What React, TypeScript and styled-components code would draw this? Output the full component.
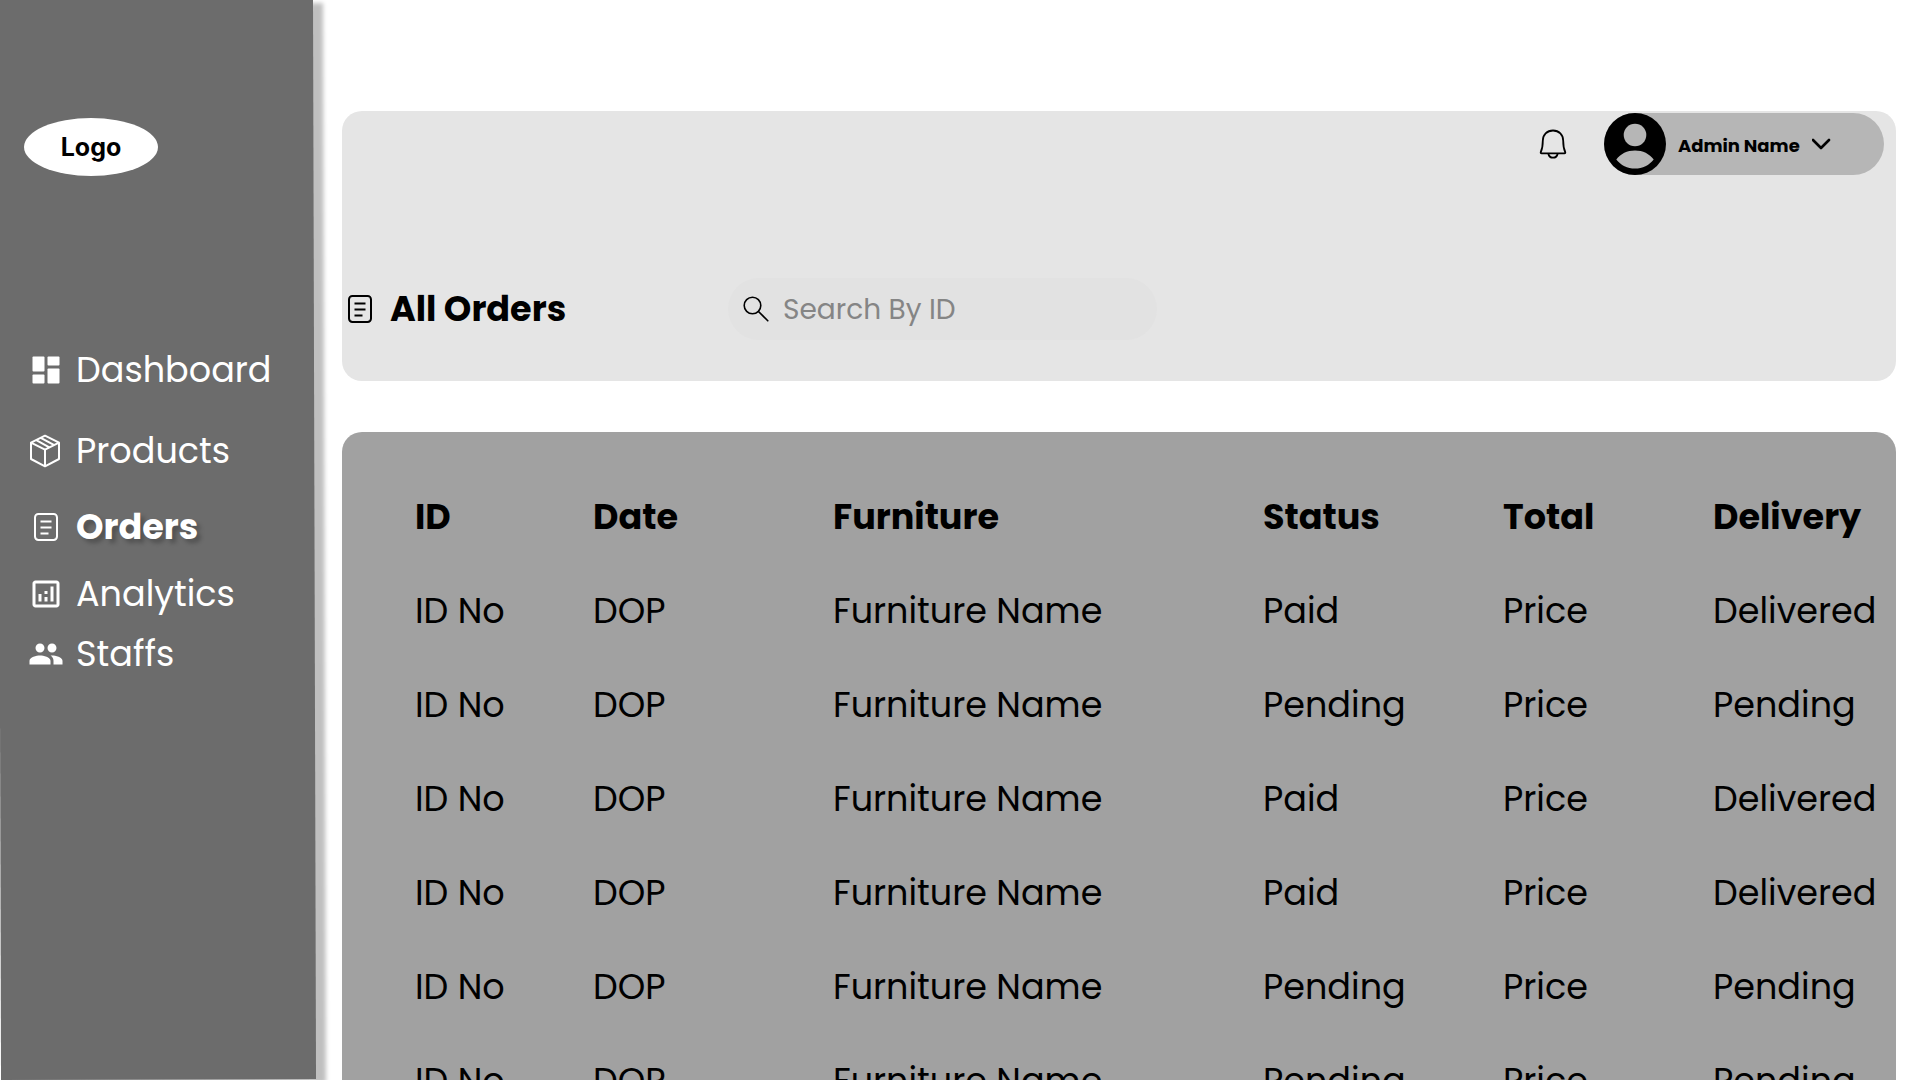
import React from "react";
import styled, { createGlobalStyle, css } from "styled-components";

const GlobalStyle = createGlobalStyle`
  *, *::before { box-sizing: border-box; }
  body {
    margin: 0;
    background: #fff;
    color: #000;
    font-family: Poppins, Inter, sans-serif;
  }
`;

const Shell = styled.div`
  display: flex;
  height: 100vh;
  overflow: hidden;
`;

const Sidebar = styled.aside`
  position: relative;
  flex: none;
  width: 314px;
  padding: 118px 24px 0;
  color: #fff;

  &::before {
    content: "";
    position: absolute;
    z-index: -1;
    inset: 0 1px 0 -2px;
    background: #6c6c6c;
    box-shadow: 10px 4px 4px rgba(0, 0, 0, 0.25);
    transform: rotate(-0.16deg);
    transform-origin: top left;
  }
`;

const Logo = styled.a`
  display: flex;
  align-items: center;
  justify-content: center;
  width: 134px;
  height: 58px;
  border-radius: 50%;
  background: #fff;
  color: #000;
  font-family: Inter, sans-serif;
  font-size: 25px;
  font-weight: 700;
  text-decoration: none;
`;

const Menu = styled.nav`
  display: flex;
  flex-direction: column;
  padding-top: 167px;
`;

const MenuLink = styled.a<{ $active?: boolean; $gap: number }>`
  display: flex;
  align-items: center;
  gap: 12px;
  height: 54px;
  padding-left: 4px;
  margin-bottom: ${(p) => p.$gap}px;
  color: inherit;
  font-size: 35px;
  line-height: 54px;
  text-decoration: none;
  white-space: nowrap;
  ${(p) =>
    p.$active &&
    css`
      font-weight: 700;
      text-shadow: 4px 4px 4px rgba(0, 0, 0, 0.25);
    `}
`;

const Icon = styled.svg<{ $size: number }>`
  display: block;
  flex: none;
  width: ${(p) => p.$size}px;
  height: ${(p) => p.$size}px;
`;

const Main = styled.main`
  flex: 1;
  min-width: 0;
  display: flex;
  flex-direction: column;
  gap: 51px;
  padding: 111px 24px 0 28px;
`;

const Header = styled.header`
  flex: none;
  display: flex;
  flex-direction: column;
  gap: 103px;
  padding: 2px 12px 41px 0;
  border-radius: 20px;
  background: #e5e5e5;
`;

const Account = styled.div`
  display: flex;
  align-items: center;
  justify-content: flex-end;
  gap: 33px;
`;

const PlainButton = styled.button`
  padding: 0;
  border: 0;
  background: none;
  color: inherit;
`;

const Profile = styled.button`
  display: flex;
  align-items: center;
  gap: 12px;
  width: 280px;
  height: 62px;
  padding: 0;
  border: 0;
  border-radius: 31px;
  background: #b6b6b6;
  color: #000;
  font-family: inherit;
  font-size: 18px;
  font-weight: 700;
  white-space: nowrap;
`;

const ProfileName = styled.span`
  padding-top: 3px;
`;

const Toolbar = styled.div`
  display: flex;
  align-items: center;
`;

const Title = styled.h1`
  display: flex;
  align-items: center;
  gap: 12px;
  width: 386px;
  margin: 0;
  font-size: 35px;
  line-height: 54px;
  font-weight: 700;
  white-space: nowrap;
`;

const Search = styled.label`
  display: flex;
  align-items: center;
  gap: 12px;
  width: 429px;
  height: 62px;
  padding: 0 24px 0 13px;
  border-radius: 31px;
  background: #e2e2e2;
`;

const SearchInput = styled.input`
  flex: 1;
  min-width: 0;
  padding: 2px 0 0;
  border: 0;
  outline: 0;
  background: none;
  font-family: inherit;
  font-size: 28px;
  line-height: 42px;
  &::placeholder { color: #858585; opacity: 1; }
`;

const Panel = styled.section`
  flex: none;
  padding: 38px 0 0 73px;
  border-radius: 20px;
  background: #a1a1a1;
`;

const Table = styled.table`
  width: 100%;
  table-layout: fixed;
  border-collapse: collapse;
  font-size: 35px;
  line-height: 54px;
`;

const Col = styled.col<{ $width?: number }>`
  width: ${(p) => (p.$width ? `${p.$width}px` : "auto")};
`;

const cell = css`
  height: 94px;
  padding: 0;
  text-align: left;
  white-space: nowrap;
`;

const Th = styled.th`
  ${cell}
  font-weight: 700;
`;

const Td = styled.td`
  ${cell}
`;

const DashboardIcon = () => (
  <Icon $size={36} viewBox="0 0 24 24" fill="currentColor" aria-hidden>
    <rect x="3" y="3" width="8" height="10" rx=".6" />
    <rect x="3" y="15" width="8" height="6" rx=".6" />
    <rect x="13" y="3" width="8" height="6" rx=".6" />
    <rect x="13" y="11" width="8" height="10" rx=".6" />
  </Icon>
);

const BoxIcon = () => (
  <Icon $size={36} viewBox="0 0 36 36" fill="none" stroke="currentColor" strokeWidth="2" strokeLinejoin="round" aria-hidden>
    <path d="M17 2.700 31 9.700V26L17 33.300 3 26V9.700ZM3 9.700l14 7 14-7M17 16.700v16.600M12.800 4.900l13 6.900M8.300 7.200l13 7.200" />
  </Icon>
);

const OrderIcon = () => (
  <Icon $size={36} viewBox="0 0 36 36" fill="none" stroke="currentColor" strokeWidth="2" aria-hidden>
    <rect x="7" y="5" width="22" height="26" rx="3.400" />
    <path d="M12.500 12.500h11M12.500 18.500h11M12.500 24.500h8" />
  </Icon>
);

const AnalyticsIcon = () => (
  <Icon $size={36} viewBox="0 0 24 24" fill="currentColor" aria-hidden>
    <path d="M19 3H5c-1.1 0-2 .9-2 2v14c0 1.1.9 2 2 2h14c1.1 0 2-.9 2-2V5c0-1.1-.9-2-2-2zm0 16H5V5h14v14zM7 12h2v5H7zm8-5h2v10h-2zm-4 7h2v3h-2zm0-4h2v2h-2z" />
  </Icon>
);

const StaffIcon = () => (
  <Icon $size={36} viewBox="0 0 24 24" fill="currentColor" aria-hidden>
    <path d="M16 11c1.66 0 2.99-1.34 2.99-3S17.66 5 16 5s-3 1.34-3 3 1.34 3 3 3zm-8 0c1.66 0 2.99-1.34 2.99-3S9.66 5 8 5 5 6.34 5 8s1.34 3 3 3zm0 2c-2.33 0-7 1.17-7 3.5V19h14v-2.5c0-2.33-4.67-3.5-7-3.5zm8 0c-.29 0-.62.02-.97.05 1.16.84 1.97 1.97 1.97 3.45V19h6v-2.5c0-2.33-4.67-3.5-7-3.5z" />
  </Icon>
);

const BellIcon = () => (
  <Icon $size={36} viewBox="0 0 36 36" fill="none" stroke="currentColor" strokeWidth="1.800" strokeLinejoin="round" aria-hidden>
    <path d="M18 4.500c-6 0-10.200 4.300-10.200 10.200 0 5.500-.6 8.300-2 11.300-.3.800 0 1.300.8 1.300h22.800c.8 0 1.100-.5.8-1.300-1.400-3-2-5.800-2-11.300C28.200 8.800 24 4.500 18 4.500Z" />
    <path d="M13.300 27.500c.5 2.700 2.300 4.200 4.700 4.200s4.200-1.500 4.700-4.200" />
  </Icon>
);

const AvatarIcon = () => (
  <Icon $size={62} viewBox="0 0 62 62" aria-hidden>
    <circle cx="31" cy="31" r="31" fill="#000" />
    <circle cx="31" cy="22" r="11.300" fill="#b6b6b6" />
    <path d="M12.300 46.500C16.500 40.800 23.200 37.500 31 37.500s14.500 3.300 18.700 9C45.300 52.300 38.500 55.600 31 55.600s-14.300-3.300-18.700-9.100Z" fill="#b6b6b6" />
  </Icon>
);

const ChevronIcon = () => (
  <Icon $size={20} viewBox="0 0 20 20" fill="none" stroke="currentColor" strokeWidth="2.600" strokeLinecap="round" strokeLinejoin="round" aria-hidden>
    <path d="m1 6 8 8 8-8" />
  </Icon>
);

const SearchIcon = () => (
  <Icon $size={30} viewBox="0 0 30 30" fill="none" stroke="currentColor" strokeWidth="1.600" strokeLinecap="round" aria-hidden>
    <circle cx="11.500" cy="11.500" r="8.300" />
    <path d="m17.500 17.500 9.300 9.300" />
  </Icon>
);

const menu = [
  { label: "Dashboard", icon: <DashboardIcon />, gap: 27 },
  { label: "Products", icon: <BoxIcon />, gap: 22 },
  { label: "Orders", icon: <OrderIcon />, gap: 13, active: true },
  { label: "Analytics", icon: <AnalyticsIcon />, gap: 6 },
  { label: "Staffs", icon: <StaffIcon />, gap: 0 },
];

const columns = [
  { label: "ID", width: 178 },
  { label: "Date", width: 240 },
  { label: "Furniture", width: 430 },
  { label: "Status", width: 240 },
  { label: "Total", width: 210 },
  { label: "Delivery" },
];

const orders = [true, false, true, true, false, false].map((paid) => [
  "ID No",
  "DOP",
  "Furniture Name",
  paid ? "Paid" : "Pending",
  "Price",
  paid ? "Delivered" : "Pending",
]);

export default function App() {
  return (
    <Shell>
      <GlobalStyle />
      <Sidebar>
        <Logo href="#">Logo</Logo>
        <Menu>
          {menu.map((m) => (
            <MenuLink key={m.label} href="#" $gap={m.gap} $active={m.active}>
              {m.icon}
              {m.label}
            </MenuLink>
          ))}
        </Menu>
      </Sidebar>
      <Main>
        <Header>
          <Account>
            <PlainButton type="button" aria-label="Notifications">
              <BellIcon />
            </PlainButton>
            <Profile type="button">
              <AvatarIcon />
              <ProfileName>Admin Name</ProfileName>
              <ChevronIcon />
            </Profile>
          </Account>
          <Toolbar>
            <Title>
              <OrderIcon />
              All Orders
            </Title>
            <Search>
              <SearchIcon />
              <SearchInput type="search" placeholder="Search By ID" aria-label="Search by ID" />
            </Search>
          </Toolbar>
        </Header>
        <Panel>
          <Table>
            <colgroup>
              {columns.map((c) => (
                <Col key={c.label} $width={c.width} />
              ))}
            </colgroup>
            <thead>
              <tr>
                {columns.map((c) => (
                  <Th key={c.label} scope="col">{c.label}</Th>
                ))}
              </tr>
            </thead>
            <tbody>
              {orders.map((row, r) => (
                <tr key={r}>
                  {row.map((value, c) => (
                    <Td key={c}>{value}</Td>
                  ))}
                </tr>
              ))}
            </tbody>
          </Table>
        </Panel>
      </Main>
    </Shell>
  );
}
